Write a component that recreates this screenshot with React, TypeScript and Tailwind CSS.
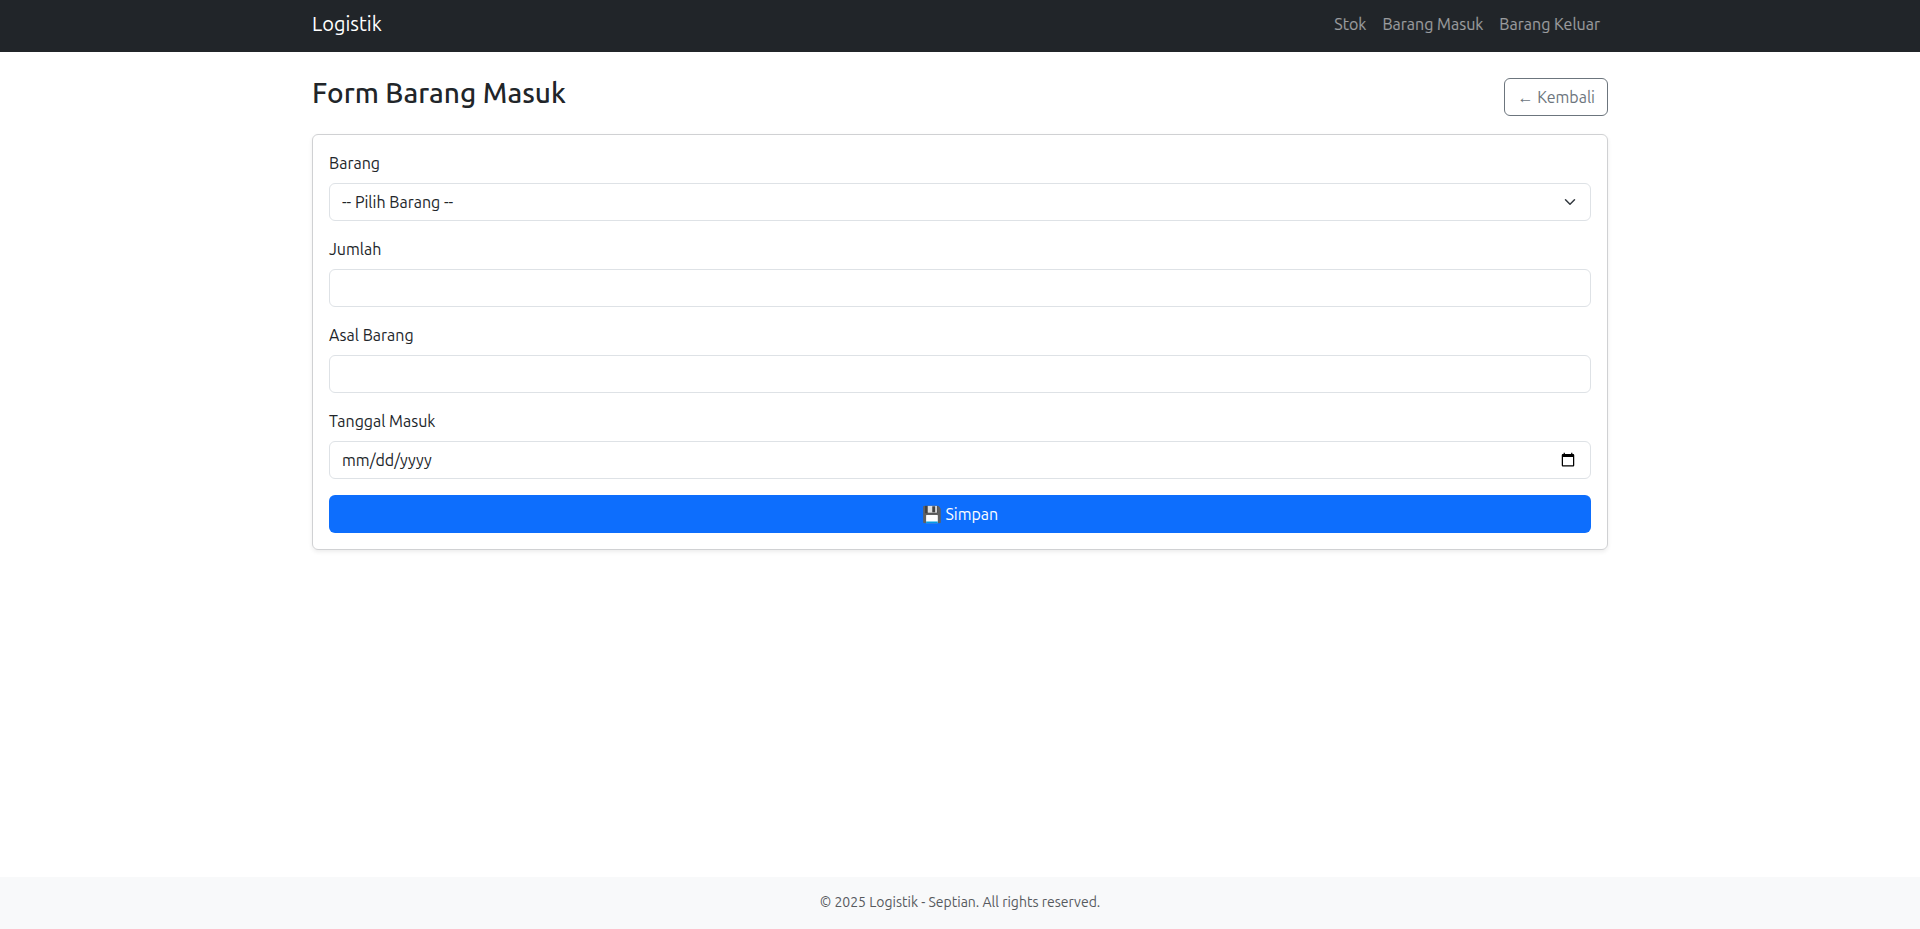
import React from "react";

const controlClass =
  "block h-[38px] w-full rounded-md border border-[#dee2e6] bg-white px-3 py-[6px] text-base leading-6 text-[#212529]";

const dateFieldClass =
  "[&::-webkit-datetime-edit-month-field]:p-0 [&::-webkit-datetime-edit-day-field]:p-0 [&::-webkit-datetime-edit-year-field]:p-0 [&::-webkit-datetime-edit-text]:p-0";

const navItems = ["Stok", "Barang Masuk", "Barang Keluar"];

function Field({ id, label, children }: { id: string; label: string; children: React.ReactNode }) {
  return (
    <div className="mb-4">
      <label htmlFor={id} className="mb-2 block">
        {label}
      </label>
      {children}
    </div>
  );
}

export default function App() {
  return (
    <div className="flex min-h-screen flex-col bg-white font-['Ubuntu','Noto_Sans','Liberation_Sans',sans-serif] text-base leading-6 text-[#212529]">
      <nav className="bg-[#212529] pt-1 pb-2">
        <div className="mx-auto flex w-full max-w-[1320px] items-center justify-between px-3">
          <a href="#" className="py-[5px] text-xl leading-[30px] text-white">
            Logistik
          </a>
          <ul className="flex">
            {navItems.map((item) => (
              <li key={item}>
                <a href="#" className="block p-2 text-white/55">
                  {item}
                </a>
              </li>
            ))}
          </ul>
        </div>
      </nav>

      <main className="mx-auto w-full max-w-[1320px] grow px-3 pt-6">
        <div className="mb-4 flex items-center justify-between">
          <h1 className="mb-2 text-[28px] leading-[34px] font-medium">Form Barang Masuk</h1>
          <a
            href="#"
            className="rounded-md border border-[#6c757d] px-3 py-[6px] text-[#6c757d]"
          >
            ← Kembali
          </a>
        </div>

        <form
          className="rounded-md border border-[#d0d1d3] p-4 shadow-[0_2px_4px_rgba(0,0,0,0.075)]"
          onSubmit={(event) => event.preventDefault()}
        >
          <Field id="barang" label="Barang">
            <div className="grid items-center">
              <select
                id="barang"
                className={`${controlClass} col-start-1 row-start-1 appearance-none`}
              >
                <option>-- Pilih Barang --</option>
              </select>
              <svg
                viewBox="0 0 16 16"
                className="pointer-events-none col-start-1 row-start-1 mr-[13px] h-3 w-4 justify-self-end"
                aria-hidden="true"
              >
                <path
                  d="m2 5 6 6 6-6"
                  fill="none"
                  stroke="#343a40"
                  strokeWidth="2"
                  strokeLinecap="round"
                  strokeLinejoin="round"
                />
              </svg>
            </div>
          </Field>
          <Field id="jumlah" label="Jumlah">
            <input id="jumlah" type="number" className={controlClass} />
          </Field>
          <Field id="asal" label="Asal Barang">
            <input id="asal" type="text" className={controlClass} />
          </Field>
          <Field id="tanggal" label="Tanggal Masuk">
            <input id="tanggal" type="date" className={`${controlClass} ${dateFieldClass}`} />
          </Field>
          <button
            type="submit"
            className="block h-[38px] w-full rounded-md bg-[#0d6efd] px-3 text-white"
          >
            💾 Simpan
          </button>
        </form>
      </main>

      <footer className="bg-[#f8f9fa] pt-[15px] pb-4 text-center text-sm leading-[21px] text-[#575a5e]">
        © 2025 Logistik - Septian. All rights reserved.
      </footer>
    </div>
  );
}
